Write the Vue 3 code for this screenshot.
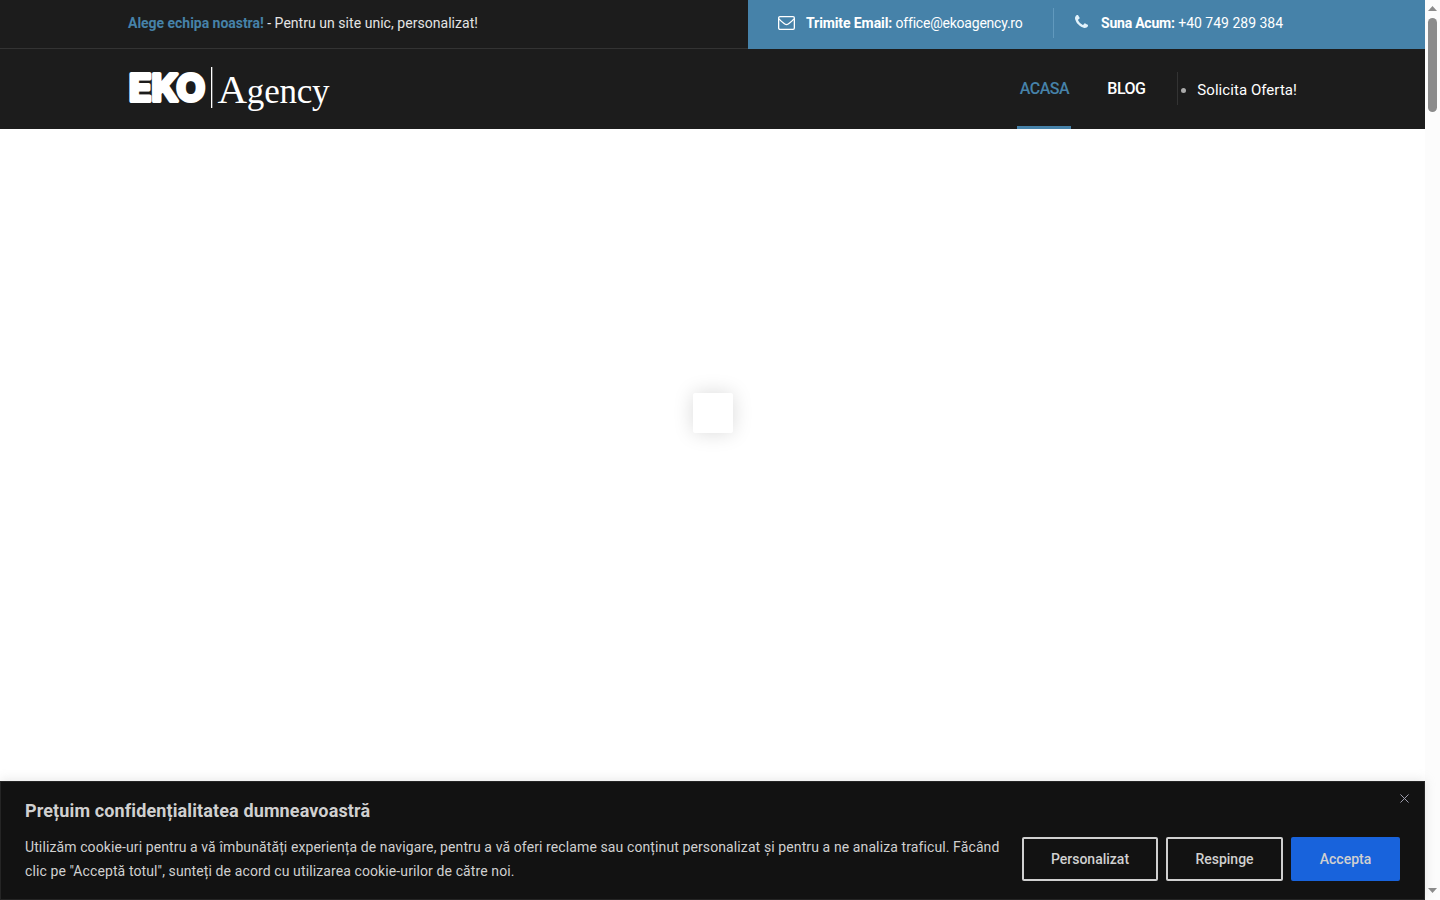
<template>
  <div class="page">
    <div class="site">
      <header>
        <div class="topbar">
          <div class="slogan">
            <p><strong class="slogan-lead">Alege echipa noastra!</strong> <span class="slogan-text">- Pentru un site unic, personalizat!</span></p>
          </div>
          <div class="contact">
            <div class="contact-item email">
              <svg class="icon-mail" viewBox="0 0 17 14" width="17" height="14">
                <rect x="0.65" y="0.65" width="15.7" height="12.7" rx="1.3" />
                <path d="M1 2.8C2.8 5 5.2 6.7 6.9 8.1q1.6 1.2 3.2 0C11.8 6.7 14.2 5 16 2.8" />
              </svg>
              <p><strong class="email-label">Trimite Email:</strong> <span class="email-value">office@ekoagency.ro</span></p>
            </div>
            <div class="contact-item phone">
              <svg class="icon-phone" viewBox="0 0 1408 1408" width="13" height="13">
                <path d="M1408 1112q0 27-10 70.500t-21 68.500q-21 50-122 106-94 51-186 51-27 0-53-3.500t-57.500-12.500-47-14.500-55.500-20.500-49-18q-98-35-175-83-127-79-264-216t-216-264q-48-77-83-175-3-9-18-49t-20.500-55.500-14.500-47-12.500-57.500-3.500-53q0-92 51-186 56-101 106-122 25-11 68.500-21t70.500-10q14 0 21 3 18 6 53 76 11 19 30 54t35 63.500 31 53.500q3 4 17.500 25t21.500 35.500 7 28.500q0 20-28.500 50t-62 55-62 53-28.500 46q0 9 5 22.500t8.500 20.500 14 24 11.500 19q76 137 174 235t235 174q2 1 19 11.500t24 14 20.500 8.500 22.500 5q18 0 46-28.500t53-62 55-62 50-28.500q14 0 28.500 7t35.500 21.500 25 17.500q25 15 53.500 31t63.500 35 54 30q70 35 76 53 3 7 3 21z" />
              </svg>
              <p><strong class="phone-label">Suna Acum:</strong> <span>+40 749 289 384</span></p>
            </div>
          </div>
        </div>

        <div class="navbar">
          <a class="logo" href="#">
            <svg width="204" height="50" viewBox="0 0 204 50">
              <text class="logo-eko" x="2" y="35.5" textLength="76" lengthAdjust="spacingAndGlyphs">EKO</text>
              <rect x="84" y="2" width="1.3" height="41" fill="#fff" />
              <text class="logo-agency" x="90.500" y="37.500" textLength="112"><tspan class="logo-cap">A</tspan>gency</text>
            </svg>
          </a>
          <nav>
            <a class="nav-link active" href="#">ACASA</a>
            <a class="nav-link" href="#">BLOG</a>
            <ul class="offer">
              <li><a href="#">Solicita Oferta!</a></li>
            </ul>
          </nav>
        </div>
      </header>

      <main>
        <div class="loader"></div>
      </main>

      <div v-if="bannerOpen" class="cookie-banner">
        <button class="btn-close" aria-label="Close" @click="bannerOpen = false">
          <svg viewBox="0 0 10 10" width="9" height="9">
            <path d="M0.5 0.5l9 9M9.5 0.5l-9 9" />
          </svg>
        </button>
        <p class="cookie-title">Prețuim confidențialitatea dumneavoastră</p>
        <div class="cookie-row">
          <p class="cookie-text">
            Utilizăm cookie-uri pentru a vă îmbunătăți experiența de navigare, pentru a vă oferi reclame sau conținut personalizat și pentru a ne analiza traficul. Făcând clic pe "Acceptă totul", sunteți de acord cu utilizarea cookie-urilor de către noi.
          </p>
          <div class="cookie-buttons">
            <button class="btn btn-custom">Personalizat</button>
            <button class="btn btn-reject">Respinge</button>
            <button class="btn btn-accept">Accepta</button>
          </div>
        </div>
      </div>
    </div>

    <div class="scrollbar">
      <svg width="9" height="5" viewBox="0 0 9 5"><path d="M0 5L4.5 0L9 5z" /></svg>
      <div class="thumb"></div>
      <svg class="arrow-down" width="9" height="5" viewBox="0 0 9 5"><path d="M0 0L4.5 5L9 0z" /></svg>
    </div>
  </div>
</template>

<script setup>
import { ref } from 'vue'

const bannerOpen = ref(true)
</script>

<style>
body {
  margin: 0;
  overflow: hidden;
}
</style>

<style scoped>
.page {
  display: flex;
  width: 1440px;
  height: 900px;
  background: #fff;
  font-family: Roboto, "Liberation Sans", sans-serif;
}

p {
  margin: 0;
}

a {
  color: #fff;
  text-decoration: none;
}

.site {
  display: flex;
  flex-direction: column;
  width: 1425px;
}

/* Top bar */
.topbar {
  display: flex;
  height: 49px;
  background: #1c1c1c;
  font-size: 14px;
  line-height: 46px;
  white-space: nowrap;
}

.slogan {
  box-sizing: border-box;
  width: 748px;
  padding-left: 128px;
  border-bottom: 1px solid #333;
  color: #e4e4e4;
}

.slogan-lead {
  color: #4682a9;
  letter-spacing: -0.03px;
}

.slogan-text {
  letter-spacing: 0.04px;
}

.contact {
  display: flex;
  flex: 1;
  align-items: flex-start;
  padding-left: 30px;
  background: #4682a9;
  color: #fff;
}

.contact-item {
  display: flex;
  align-items: center;
  height: 46px;
}

.email {
  width: 275px;
  gap: 11px;
}

.icon-mail {
  fill: none;
  stroke: #fff;
  stroke-width: 1.3;
}

.phone {
  gap: 13px;
  height: 30px;
  margin-top: 8px;
  padding-left: 21px;
  border-left: 1px solid #6199bd;
}

.phone p {
  line-height: 30px;
}

.icon-phone {
  fill: #e2f2fb;
  margin-top: -3px;
}

.email-label {
  letter-spacing: -0.1px;
}

.email-value {
  letter-spacing: -0.22px;
}

.phone-label {
  letter-spacing: -0.22px;
}

/* Navigation */
.navbar {
  display: flex;
  justify-content: space-between;
  box-sizing: border-box;
  height: 80px;
  padding: 0 128px 0 127px;
  background: #1c1c1c;
}

.logo {
  padding-top: 16px;
}

.logo-eko {
  fill: #fff;
  stroke: #fff;
  stroke-width: 4;
  stroke-linejoin: round;
  font: 700 37px Inter, sans-serif;
}

.logo-agency {
  fill: #fff;
  font: 35px "Liberation Serif", serif;
}

.logo-cap {
  font-size: 41px;
}

nav {
  display: flex;
}

.nav-link {
  box-sizing: border-box;
  width: 39px;
  height: 80px;
  margin-right: 31px;
  font-size: 16px;
  font-weight: 500;
  letter-spacing: -0.5px;
  line-height: 79px;
}

.active {
  width: 54px;
  margin-right: 36px;
  padding-left: 2.5px;
  border-bottom: 3px solid #4682a9;
  color: #4682a9;
}

.offer {
  height: 33px;
  margin: 23px 0 0;
  padding: 0 0 0 19px;
  border-left: 1px solid #333;
  color: #aaa;
  font-size: 15px;
  line-height: 37px;
}

.offer a {
  letter-spacing: 0.06px;
}

/* Preloader */
main {
  display: flex;
  flex: 1;
  justify-content: center;
}

.loader {
  width: 40px;
  height: 40px;
  margin-top: 264px;
  background: #fff;
  border-radius: 2px;
  box-shadow: 0 0 20px rgba(0, 0, 0, 0.15);
}

/* Cookie banner */
.cookie-banner {
  position: relative;
  box-sizing: border-box;
  height: 119px;
  padding: 17px 24px 0;
  border: 1px solid #252525;
  background: #121212;
  box-shadow: 0 -1px 10px rgba(172, 171, 171, 0.3);
  color: #d0d0d0;
}

.btn-close {
  position: absolute;
  top: 12px;
  right: 15px;
  display: flex;
  padding: 0;
  border: none;
  background: none;
  cursor: pointer;
}

.btn-close path {
  fill: none;
  stroke: #a0a0b0;
  stroke-width: 1.1;
}

.cookie-title {
  font-size: 18px;
  font-weight: 700;
  letter-spacing: 0.12px;
  line-height: 24px;
}

.cookie-row {
  display: flex;
  justify-content: space-between;
  margin-top: 12px;
}

.cookie-text {
  width: 980px;
  font-size: 14px;
  letter-spacing: 0.107px;
  line-height: 24px;
}

.cookie-buttons {
  display: flex;
  gap: 8px;
  padding-top: 2px;
}

.btn {
  box-sizing: border-box;
  height: 44px;
  padding: 0;
  border: 2px solid #d0d0d0;
  border-radius: 2px;
  background: transparent;
  color: #d0d0d0;
  font: 500 14px Roboto, sans-serif;
  cursor: pointer;
}

.btn-custom {
  width: 136px;
}

.btn-reject {
  width: 117px;
}

.btn-accept {
  width: 109px;
  border-color: #1863dc;
  background: #1863dc;
}

/* Page scrollbar */
.scrollbar {
  display: flex;
  flex-direction: column;
  align-items: center;
  box-sizing: border-box;
  width: 15px;
  padding: 6px 0 7px;
  background: #fcfcfc;
}

.scrollbar svg {
  fill: #8b8b8b;
}

.thumb {
  width: 9px;
  height: 94px;
  margin-top: 7px;
  border-radius: 5px;
  background: #8b8b8b;
}

.arrow-down {
  margin-top: auto;
}
</style>
